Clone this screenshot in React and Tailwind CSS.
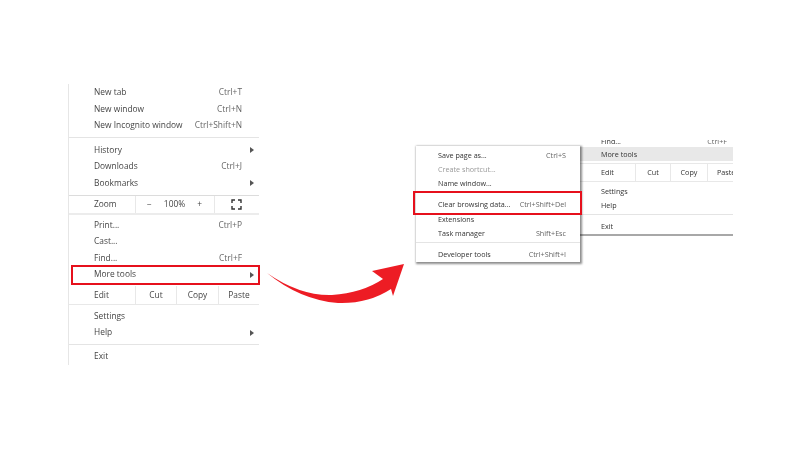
import React from "react";

const font = { fontFamily: '"Open Sans", "Liberation Sans", sans-serif' };

function Row({ label, keys, arrow, muted, h = "h-[16.5px]", pad = "pl-[25px] pr-[17px]" }) {
  return (
    <div className={`flex items-center justify-between ${pad} ${h} ${muted ? "text-[#999]" : ""}`}>
      <span>{label}</span>
      {keys && <span className="text-[#666]">{keys}</span>}
      {arrow && <span className="w-0 h-0 mr-[-12px] border-y-[3px] border-y-transparent border-l-[4px] border-l-[#555]" />}
    </div>
  );
}

function Sep({ className = "" }) {
  return <div className={`h-px bg-[#e4e4e4] ${className}`} />;
}

function FullscreenIcon() {
  return (
    <svg width="11" height="11" viewBox="0 0 11 11" fill="none" stroke="#333" strokeWidth="1.4">
      <path d="M1 4V1h3M7 1h3v3M10 7v3H7M4 10H1V7" />
    </svg>
  );
}

function Arrow() {
  return (
    <svg className="absolute left-0 top-0 pointer-events-none" width="800" height="450" viewBox="0 0 800 450">
      <path
        d="M267 273 Q 300 300 338 303 Q 368 304 391 289 L 393 296 L 404 264 L 372 271 L 383 279 Q 362 293 332 295 Q 300 296 267 273Z"
        fill="#ed1c24"
      />
    </svg>
  );
}

function MainMenu() {
  return (
    <div className="w-[191px] mt-[84px] ml-[68px] border-l border-[#e6e6e6] text-[8.4px] pt-[0.5px]">
      <Row label="New tab" keys="Ctrl+T" />
      <Row label="New window" keys="Ctrl+N" />
      <Row label="New Incognito window" keys="Ctrl+Shift+N" />
      <Sep className="mt-[2.5px] mb-[4.5px]" />
      <Row label="History" arrow />
      <Row label="Downloads" keys="Ctrl+J" />
      <Row label="Bookmarks" arrow />
      <div className="mt-[3px] h-[20px] flex items-center border-t border-[#dcdcdc] border-b-2 border-b-[#ececec]">
        <span className="w-[66px] pl-[25px]">Zoom</span>
        <div className="w-[80px] h-full flex items-center justify-between border-x border-[#e8e8e8] pl-[11px] pr-[12px]">
          <span>−</span>
          <span>100%</span>
          <span>+</span>
        </div>
        <div className="flex-1 flex justify-center pr-[2px]">
          <FullscreenIcon />
        </div>
      </div>
      <div className="h-[2.5px]" />
      <Row label="Print..." keys="Ctrl+P" />
      <Row label="Cast..." />
      <Row label="Find..." keys="Ctrl+F" />
      <div className="relative">
        <Row label="More tools" arrow />
        <div className="absolute left-[2px] right-[-1px] top-[-1.5px] h-[20px] border-2 border-[#e6101c]" />
      </div>
      <div className="mt-[3px] h-[19px] flex items-center border-b border-[#e8e8e8]">
        <span className="w-[66px] pl-[25px]">Edit</span>
        <div className="w-[41px] h-full flex items-center justify-center border-l border-[#e8e8e8]">Cut</div>
        <div className="w-[42px] h-full flex items-center justify-center border-l border-[#e8e8e8]">Copy</div>
        <div className="flex-1 h-full flex items-center justify-center border-l border-[#e8e8e8]">Paste</div>
      </div>
      <div className="h-[3px]" />
      <Row label="Settings" />
      <Row label="Help" arrow />
      <Sep className="mt-[3px] mb-[3px]" />
      <Row label="Exit" />
    </div>
  );
}

function SubMenu() {
  const rowH = "h-[14px]";
  const pad = "pl-[22px] pr-[14px]";
  return (
    <div className="relative z-10 w-[164px] mt-[146px] ml-[157px] h-[116px] bg-white pt-[2px] text-[7.2px] text-[#333] shadow-[1px_1px_2px_1px_rgba(0,0,0,0.45)]">
      <Row h={rowH} pad={pad} label="Save page as..." keys="Ctrl+S" />
      <Row h={rowH} pad={pad} label="Create shortcut..." muted />
      <Row h={rowH} pad={pad} label="Name window..." />
      <div className="relative mt-[7px] mb-[1px]">
        <Row h={rowH} pad={pad} label="Clear browsing data..." keys="Ctrl+Shift+Del" />
        <div className="absolute left-[-3px] right-[-2px] top-[-6px] h-[24px] border-2 border-[#e6101c]" />
      </div>
      <Row h={rowH} pad={pad} label="Extensions" />
      <Row h={rowH} pad={pad} label="Task manager" keys="Shift+Esc" />
      <Sep className="mt-[2px] mb-[4px] bg-[#d8d8d8]" />
      <Row h={rowH} pad={pad} label="Developer tools" keys="Ctrl+Shift+I" />
    </div>
  );
}

function BackMenu() {
  return (
    <div className="w-[153px] mt-[140px] h-[96px] border-b-2 border-[#a8a8a8] overflow-hidden text-[7.2px] text-[#333]">
      <div className="h-[7px] flex items-start justify-between pl-[21px] pr-[6px] overflow-hidden leading-[12px]">
        <span className="mt-[-5px]">Find...</span>
        <span className="mt-[-5px] text-[#666]">Ctrl+F</span>
      </div>
      <div className="h-[14px] flex items-center bg-[#e8e8e8] pl-[21px]">More tools</div>
      <div className="mt-[2px] h-[19px] flex items-center border-y border-[#e8e8e8]">
        <span className="w-[55px] pl-[21px]">Edit</span>
        <div className="w-[35px] h-full flex items-center justify-center border-l border-[#e8e8e8]">Cut</div>
        <div className="w-[37px] h-full flex items-center justify-center border-l border-[#e8e8e8]">Copy</div>
        <div className="flex-1 h-full flex items-center pl-[9px] border-l border-[#e8e8e8] overflow-hidden">Paste</div>
      </div>
      <div className="h-[2px]" />
      <div className="h-[14px] flex items-center pl-[21px]">Settings</div>
      <div className="h-[14px] flex items-center pl-[21px]">Help</div>
      <Sep className="mt-[2px] mb-[4px]" />
      <div className="h-[14px] flex items-center pl-[21px]">Exit</div>
    </div>
  );
}

export default function App() {
  return (
    <div
      className="relative w-[800px] h-[450px] overflow-hidden bg-white flex items-start text-[#444] whitespace-nowrap blur-[0.3px]"
      style={font}
    >
      <MainMenu />
      <SubMenu />
      <BackMenu />
      <Arrow />
    </div>
  );
}
